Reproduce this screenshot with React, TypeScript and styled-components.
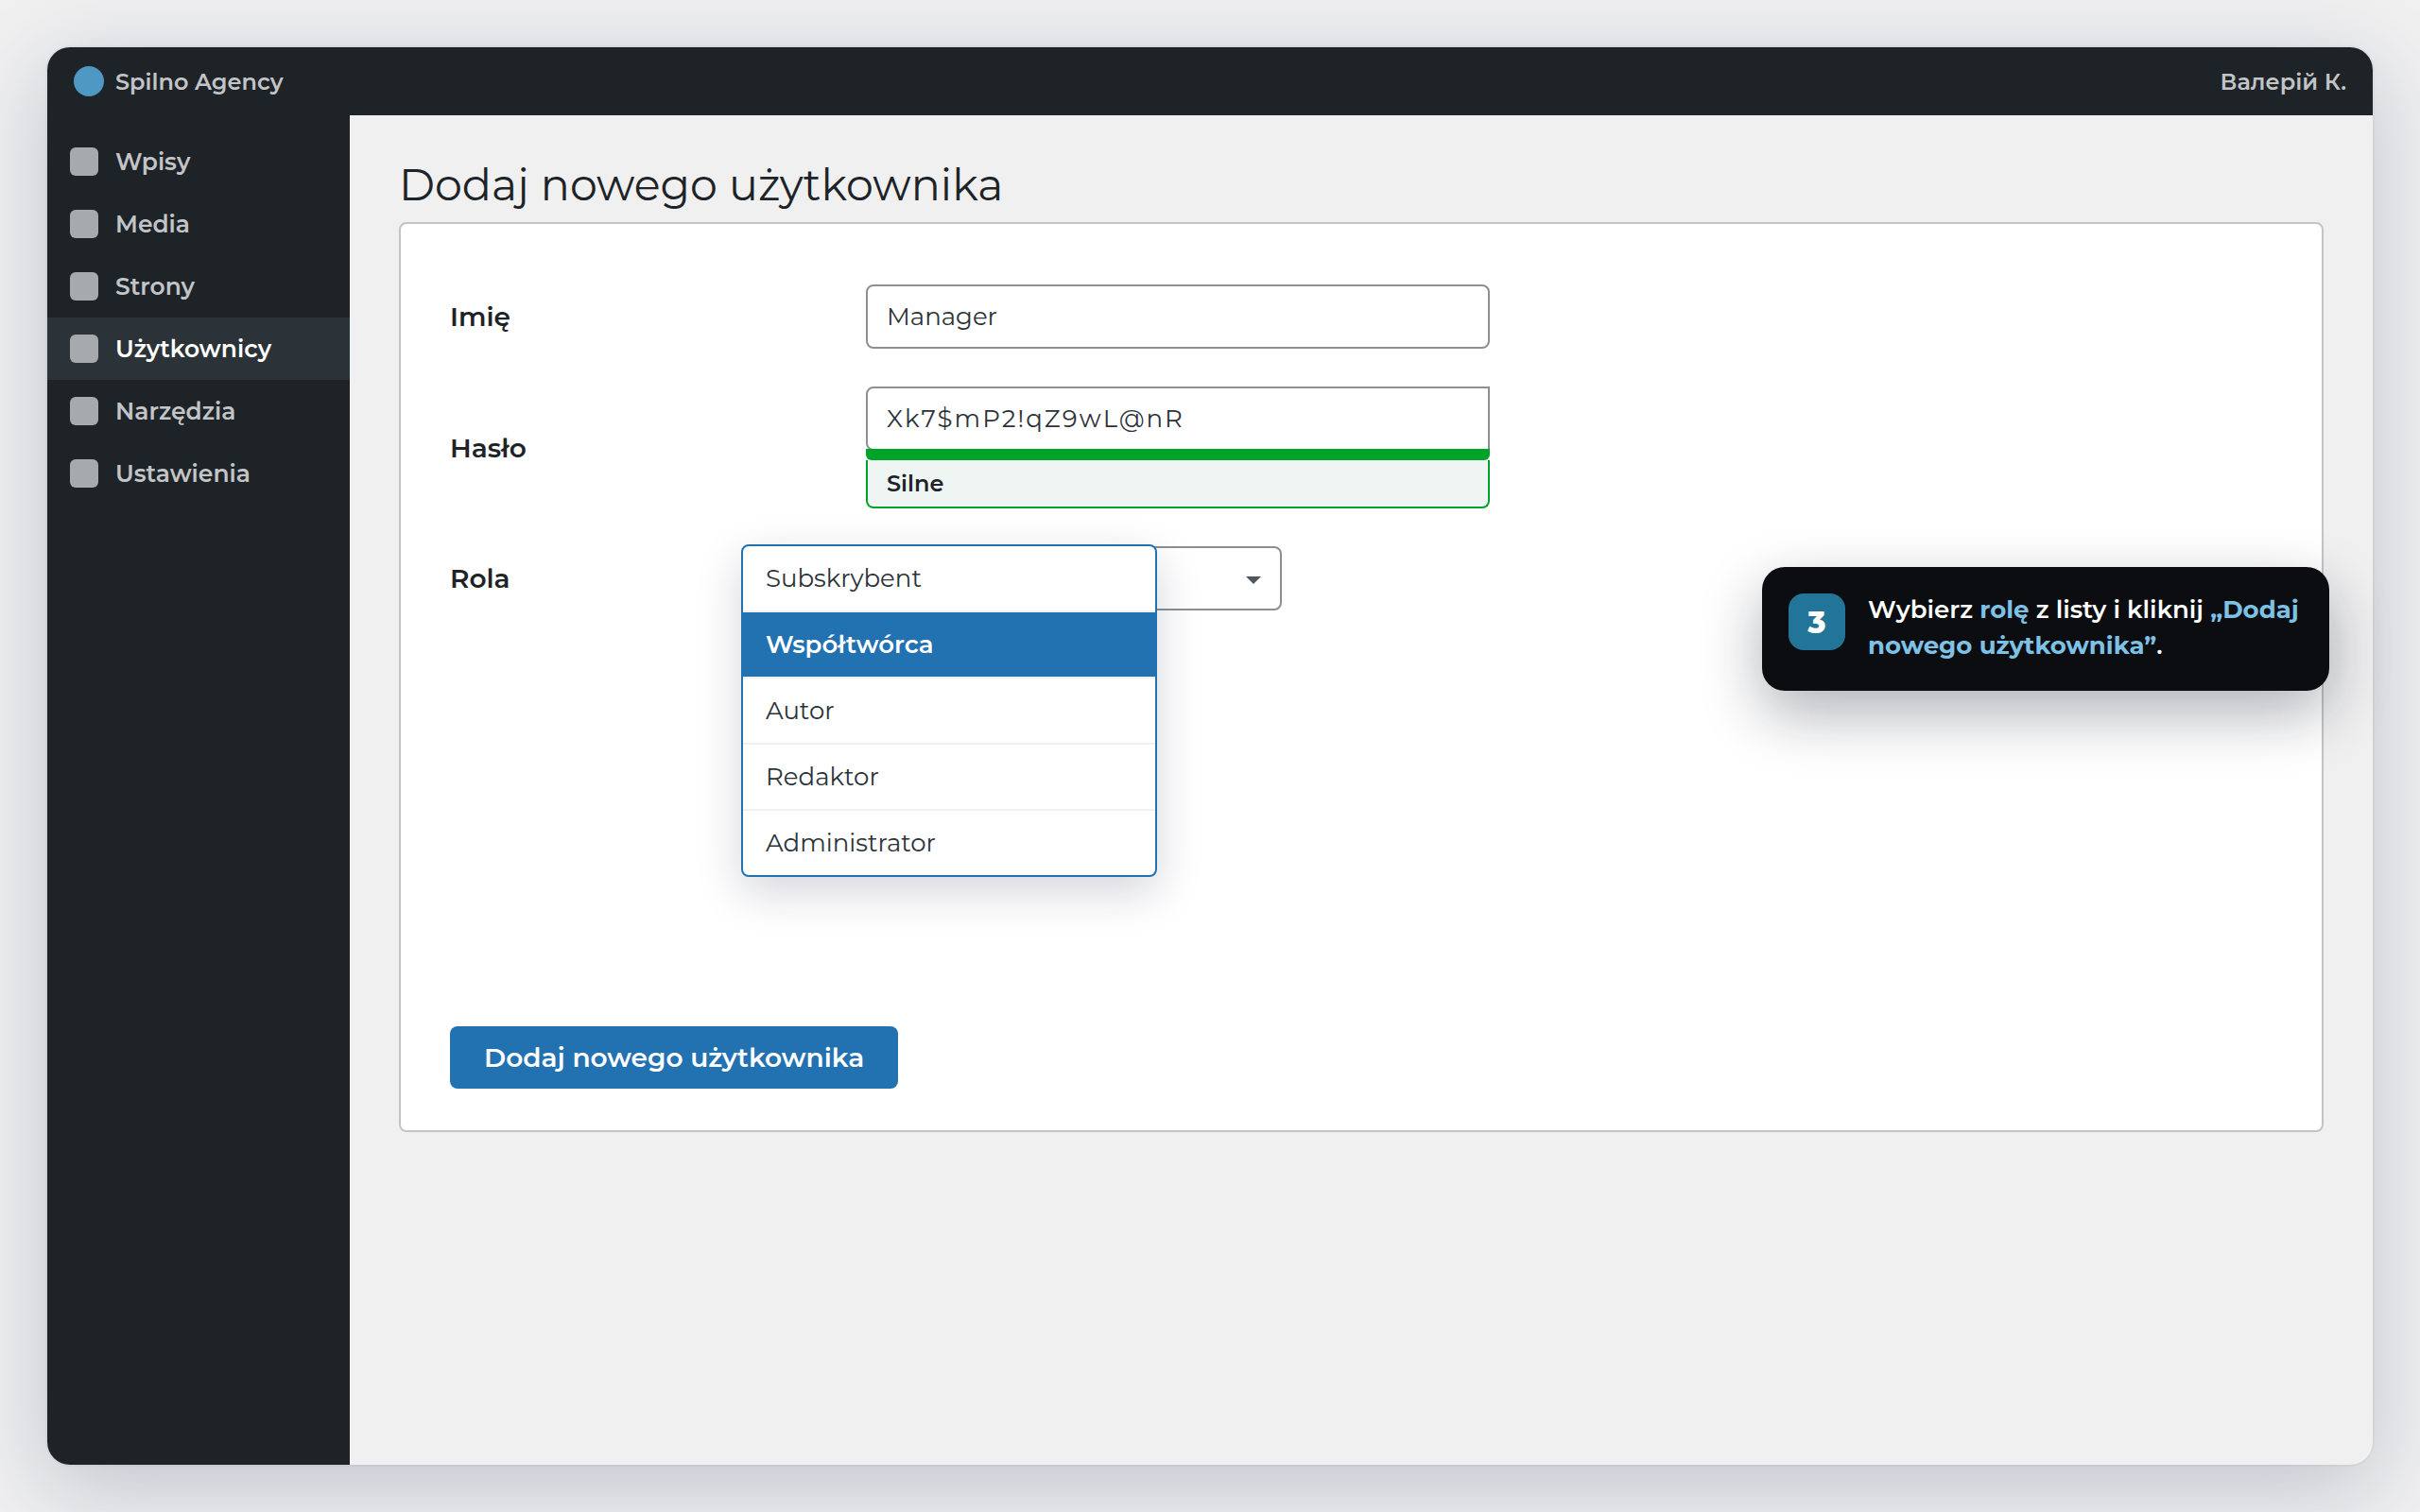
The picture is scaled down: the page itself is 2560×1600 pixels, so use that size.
import React, { useState } from 'react';
import styled, { createGlobalStyle } from 'styled-components';

const GlobalStyle = createGlobalStyle`
  *, *::before, *::after { box-sizing: border-box; }
  body {
    margin: 0;
    background: #f0f0f1;
    color: #1d2327;
    font-family: Montserrat, Inter, sans-serif;
    font-size: 26px;
    overflow: hidden;
  }
  button, input, select { font: inherit; color: inherit; }
`;

const Stage = styled.div`
  display: flex;
  height: 100vh;
  padding: 50px;
`;

const AppWindow = styled.div`
  position: relative;
  flex: 1;
  display: flex;
  flex-direction: column;
  border-radius: 24px;
  background: #f0f0f1;
  box-shadow: 0 0 0 2px rgba(0, 0, 0, 0.03), 0 24px 96px rgba(20, 35, 75, 0.22);
`;

const TopBar = styled.header`
  display: flex;
  align-items: center;
  justify-content: space-between;
  height: 72px;
  padding: 0 28px;
  border-radius: 24px 24px 0 0;
  background: #1d2327;
  color: #c3c4c7;
  font-size: 24px;
  font-weight: 600;
`;

const Brand = styled.div`
  display: flex;
  align-items: center;
  gap: 12px;
`;

const BrandDot = styled.span`
  width: 32px;
  height: 32px;
  border-radius: 50%;
  background: #4f98c3;
`;

const Body = styled.div`
  flex: 1;
  display: flex;
`;

const Sidebar = styled.nav`
  width: 320px;
  padding: 16px 0;
  border-radius: 0 0 0 24px;
  background: #1d2327;
`;

const NavItem = styled.a<{ $active?: boolean }>`
  display: flex;
  align-items: center;
  gap: 18px;
  height: 66px;
  padding: 0 24px;
  background: ${(p) => (p.$active ? '#2c3338' : 'transparent')};
  color: ${(p) => (p.$active ? '#ffffff' : '#c3c4c7')};
  font-size: 25px;
  font-weight: 600;
  text-decoration: none;
`;

const NavIcon = styled.span`
  width: 30px;
  height: 30px;
  border-radius: 6px;
  background: #a7aaad;
`;

const Main = styled.main`
  flex: 1;
  padding: 46px 52px;
`;

const Title = styled.h1`
  margin: 0 0 11px;
  font-size: 46px;
  font-weight: 400;
  line-height: 56px;
`;

const Card = styled.form`
  padding: 64px 52px 44px;
  border: 2px solid #c3c4c7;
  border-radius: 8px;
  background: #ffffff;
`;

const Fields = styled.div`
  display: grid;
  gap: 40px;
  margin-bottom: 440px;
`;

const Row = styled.div`
  display: grid;
  grid-template-columns: 440px 1fr;
  align-items: center;
`;

const Label = styled.label`
  font-size: 28px;
  font-weight: 600;
`;

const TextInput = styled.input<{ $joined?: boolean }>`
  display: block;
  width: 660px;
  height: 68px;
  padding: 0 20px;
  border: 2px solid #8c8f94;
  border-radius: ${(p) => (p.$joined ? '8px 0 0 8px' : '8px')};
  outline: none;
  background: #ffffff;
  color: #2c3338;
  letter-spacing: ${(p) => (p.$joined ? '2px' : 'normal')};
`;

const StrengthBar = styled.div`
  position: relative;
  width: 660px;
  height: 12px;
  margin-top: -2px;
  border-radius: 0 0 6px 6px;
  background: #00a32a;
`;

const StrengthNote = styled.output`
  display: flex;
  align-items: center;
  width: 660px;
  height: 51px;
  padding: 0 20px;
  border: 2px solid #00a32a;
  border-top: 0;
  border-radius: 0 0 8px 8px;
  background: #eff5f2;
  font-size: 24px;
  font-weight: 600;
`;

const SelectWrap = styled.div`
  position: relative;
  width: 440px;
`;

const Select = styled.select`
  display: block;
  width: 100%;
  height: 68px;
  padding: 0 20px;
  border: 2px solid #8c8f94;
  border-radius: 8px;
  outline: none;
  appearance: none;
  background: #ffffff;
  color: #2c3338;
`;

const Caret = styled.svg`
  position: absolute;
  top: 32px;
  right: 22px;
  width: 16px;
  height: 8px;
  pointer-events: none;
`;

const Menu = styled.div`
  position: absolute;
  top: -2px;
  left: -132px;
  width: 440px;
  border: 2px solid #2271b1;
  border-radius: 8px;
  background: #ffffff;
  box-shadow: 0 16px 48px rgba(20, 30, 60, 0.18);
`;

const Option = styled.button<{ $active?: boolean }>`
  display: block;
  width: 100%;
  height: 70px;
  padding: 0 24px;
  border: 0;
  border-bottom: 2px solid #f0f0f1;
  background: ${(p) => (p.$active ? '#2271b1' : 'transparent')};
  background-clip: padding-box;
  color: ${(p) => (p.$active ? '#ffffff' : '#2c3338')};
  font-weight: ${(p) => (p.$active ? 600 : 400)};
  text-align: left;

  &:last-child {
    height: 68px;
    border-bottom: 0;
  }
`;

const SubmitButton = styled.button`
  display: block;
  height: 66px;
  padding: 0 36px;
  border: 0;
  border-radius: 8px;
  background: #2271b1;
  color: #ffffff;
  font-size: 28px;
  font-weight: 600;
`;

const Hint = styled.aside`
  position: absolute;
  top: 550px;
  right: 46px;
  display: flex;
  align-items: flex-start;
  gap: 24px;
  width: 600px;
  padding: 26px 28px 29px;
  border-radius: 24px;
  background: #0b0d11;
  color: #ffffff;
  box-shadow: 0 24px 64px rgba(10, 15, 30, 0.32);
`;

const HintStep = styled.span`
  flex: none;
  display: flex;
  align-items: center;
  justify-content: center;
  width: 60px;
  height: 60px;
  margin-top: 2px;
  border-radius: 16px;
  background: #237499;
  font-size: 32px;
  font-weight: 800;
`;

const HintText = styled.p`
  margin: 0;
  font-weight: 600;
  line-height: 38px;
  white-space: nowrap;
`;

const Mark = styled.strong`
  color: #7fc1e5;
  font-weight: 700;
`;

const navItems = ['Wpisy', 'Media', 'Strony', 'Użytkownicy', 'Narzędzia', 'Ustawienia'];
const roles = ['Subskrybent', 'Współtwórca', 'Autor', 'Redaktor', 'Administrator'];

export default function App() {
  const [active, setActive] = useState('Współtwórca');
  const [name, setName] = useState('Manager');
  const [password, setPassword] = useState('Xk7$mP2!qZ9wL@nR');

  return (
    <>
      <GlobalStyle />
      <Stage>
        <AppWindow>
          <TopBar>
            <Brand>
              <BrandDot />
              <span>Spilno Agency</span>
            </Brand>
            <span>Валерій К.</span>
          </TopBar>
          <Body>
            <Sidebar>
              {navItems.map((item) => (
                <NavItem key={item} href="#" $active={item === 'Użytkownicy'}>
                  <NavIcon />
                  {item}
                </NavItem>
              ))}
            </Sidebar>
            <Main>
              <Title>Dodaj nowego użytkownika</Title>
              <Card onSubmit={(e) => e.preventDefault()}>
                <Fields>
                  <Row>
                    <Label htmlFor="name">Imię</Label>
                    <TextInput id="name" value={name} onChange={(e) => setName(e.target.value)} />
                  </Row>
                  <Row>
                    <Label htmlFor="password">Hasło</Label>
                    <div>
                      <TextInput
                        id="password"
                        $joined
                        spellCheck={false}
                        value={password}
                        onChange={(e) => setPassword(e.target.value)}
                      />
                      <StrengthBar />
                      <StrengthNote htmlFor="password">Silne</StrengthNote>
                    </div>
                  </Row>
                  <Row>
                    <Label htmlFor="role">Rola</Label>
                    <SelectWrap>
                      <Select id="role" value={active} onChange={(e) => setActive(e.target.value)}>
                        {roles.map((role) => (
                          <option key={role}>{role}</option>
                        ))}
                      </Select>
                      <Caret viewBox="0 0 16 8" aria-hidden="true">
                        <path d="M0 0h16L8 8z" fill="#50575e" />
                      </Caret>
                      <Menu role="listbox">
                        {roles.map((role) => (
                          <Option
                            key={role}
                            type="button"
                            role="option"
                            aria-selected={role === active}
                            $active={role === active}
                            onClick={() => setActive(role)}
                          >
                            {role}
                          </Option>
                        ))}
                      </Menu>
                    </SelectWrap>
                  </Row>
                </Fields>
                <SubmitButton type="submit">Dodaj nowego użytkownika</SubmitButton>
              </Card>
            </Main>
          </Body>
          <Hint>
            <HintStep>3</HintStep>
            <HintText>
              Wybierz <Mark>rolę</Mark> z listy i kliknij <Mark>„Dodaj<br />nowego użytkownika”</Mark>.
            </HintText>
          </Hint>
        </AppWindow>
      </Stage>
    </>
  );
}
